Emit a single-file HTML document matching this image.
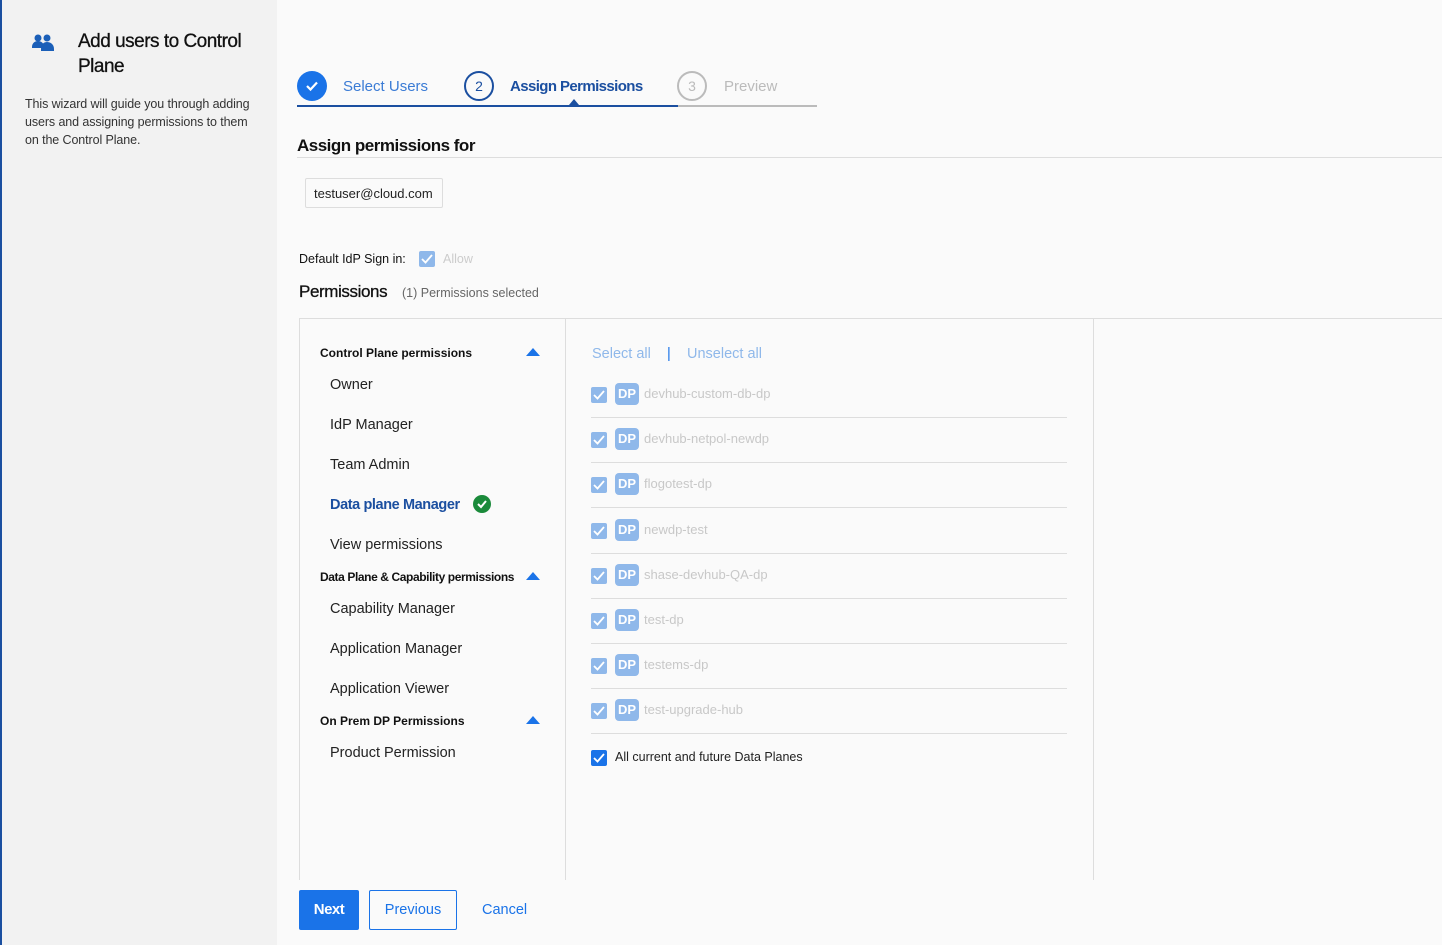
<!DOCTYPE html>
<html><head><style>
*{margin:0;padding:0;box-sizing:border-box}
body{width:1442px;height:945px;background:#fafafa;font-family:"Liberation Sans",sans-serif;position:relative;overflow:hidden;color:#222}
.a{position:absolute;white-space:nowrap}
.left{position:absolute;left:0;top:0;width:277px;height:945px;background:#f2f2f2;border-left:2px solid #1b4fa0}
.circ{position:absolute;width:30px;height:30px;border-radius:50%;text-align:center;line-height:26px;font-size:14px}
.cb{position:absolute;width:16px;height:16px;border-radius:2px;background:#8fb8ea}
.cb svg{position:absolute;left:2px;top:3px}
.dp{position:absolute;width:24px;height:22px;border-radius:4px;background:#8fb8ea;color:#fff;font-size:13px;font-weight:bold;text-align:center;line-height:22px}
.sep{position:absolute;left:591px;width:476px;height:1px;background:#ddd}
.dn{position:absolute;left:644px;font-size:13px;color:#c8c8c8}
.perm{position:absolute;left:330px;font-size:14.5px;color:#222}
.hd{position:absolute;left:320px;font-size:12px;font-weight:bold;color:#111}
.tri{position:absolute;left:526px;width:0;height:0;border-left:7px solid transparent;border-right:7px solid transparent;border-bottom:8px solid #1a73e8}
</style></head><body>
<div class="left"></div>
<svg class="a" style="left:31px;top:34px" width="25" height="18" viewBox="0 0 25 18"><circle cx="7" cy="4" r="3.5" fill="#1b5fb8"/><circle cx="16" cy="4" r="3.5" fill="#1b5fb8"/><path d="M1 13c0-4 3-6 6-6s6 2 6 6v1H1z" fill="#1b5fb8"/><path d="M10 15c0-5 3-7 6-7s7 2 7 7v2H10z" fill="#1b5fb8"/></svg>
<div class="a" style="left:78px;top:29px;font-size:19px;line-height:25px;color:#111;letter-spacing:-0.5px;-webkit-text-stroke:0.3px #111">Add users to Control<br>Plane</div>
<div class="a" style="left:25px;top:95px;font-size:12.5px;line-height:18px;color:#333;letter-spacing:-0.1px">This wizard will guide you through adding<br>users and assigning permissions to them<br>on the Control Plane.</div>

<div class="circ" style="left:297px;top:71px;background:#1a73e8"><svg width="14" height="12" viewBox="0 0 14 12" style="margin-top:9px"><path d="M2 6l3.5 3.5L12 2.5" stroke="#fff" stroke-width="2.2" fill="none"/></svg></div>
<div class="a" style="left:343px;top:78px;font-size:15px;color:#3a7bd5">Select Users</div>
<div class="circ" style="left:464px;top:71px;border:2px solid #1b4fa0;color:#1b4fa0">2</div>
<div class="a" style="left:510px;top:78px;font-size:15px;font-weight:bold;color:#1b4fa0;letter-spacing:-0.6px">Assign Permissions</div>
<div class="circ" style="left:677px;top:71px;border:2px solid #bbb;color:#bbb">3</div>
<div class="a" style="left:724px;top:78px;font-size:15px;color:#bbb">Preview</div>
<div class="a" style="left:297px;top:105px;width:381px;height:2px;background:#1b4fa0"></div>
<div class="a" style="left:678px;top:105px;width:139px;height:2px;background:#bbb"></div>
<div class="a" style="left:569px;top:99px;border-left:5px solid transparent;border-right:5px solid transparent;border-bottom:6px solid #1b4fa0"></div>

<div class="a" style="left:297px;top:136px;font-size:17px;font-weight:bold;color:#111;letter-spacing:-0.5px">Assign permissions for</div>
<div class="a" style="left:297px;top:157px;width:1145px;height:1px;background:#ddd"></div>
<div class="a" style="left:305px;top:178px;width:138px;height:30px;border:1px solid #ddd;border-radius:2px;background:#fafafa;font-size:13px;line-height:30px;padding-left:8px;color:#222">testuser@cloud.com</div>

<div class="a" style="left:299px;top:252px;font-size:12.5px;color:#111">Default IdP Sign in:</div>
<div class="cb" style="left:419px;top:251px"><svg width="12" height="10"><path d="M1 5l3.5 3.5L11 1" stroke="#fff" stroke-width="1.8" fill="none"/></svg></div>
<div class="a" style="left:443px;top:252px;font-size:12.5px;color:#ccc">Allow</div>
<div class="a" style="left:299px;top:282px;font-size:17px;color:#111;letter-spacing:-0.4px;-webkit-text-stroke:0.3px #111">Permissions</div>
<div class="a" style="left:402px;top:286px;font-size:12.5px;color:#666">(1) Permissions selected</div>

<div class="a" style="left:299px;top:318px;width:1143px;height:1px;background:#ddd"></div>
<div class="a" style="left:299px;top:318px;width:1px;height:562px;background:#ddd"></div>
<div class="a" style="left:565px;top:318px;width:1px;height:562px;background:#ddd"></div>
<div class="a" style="left:1093px;top:318px;width:1px;height:562px;background:#ddd"></div>

<div class="hd" style="top:346px">Control Plane permissions</div><div class="tri" style="top:348px"></div>
<div class="perm" style="top:377px">Owner</div>
<div class="perm" style="top:417px">IdP Manager</div>
<div class="perm" style="top:457px">Team Admin</div>
<div class="perm" style="top:497px;color:#1b4fa0;font-weight:bold;letter-spacing:-0.4px">Data plane Manager</div>
<div class="a" style="left:473px;top:495px;width:18px;height:18px;border-radius:50%;background:#1a8a3a"><svg width="18" height="18"><path d="M5 9l3 3 5-6" stroke="#fff" stroke-width="2" fill="none"/></svg></div>
<div class="perm" style="top:537px">View permissions</div>
<div class="hd" style="top:570px;letter-spacing:-0.4px">Data Plane &amp; Capability permissions</div><div class="tri" style="top:572px"></div>
<div class="perm" style="top:601px">Capability Manager</div>
<div class="perm" style="top:641px">Application Manager</div>
<div class="perm" style="top:681px">Application Viewer</div>
<div class="hd" style="top:714px">On Prem DP Permissions</div><div class="tri" style="top:716px"></div>
<div class="perm" style="top:745px">Product Permission</div>

<div class="a" style="left:592px;top:346px;font-size:14.5px;color:#8fb8ea">Select all</div>
<div class="a" style="left:667px;top:346px;font-size:14.5px;color:#1a73e8">|</div>
<div class="a" style="left:687px;top:346px;font-size:14.5px;color:#8fb8ea">Unselect all</div>

<div class="cb" style="left:591px;top:387px"><svg width="12" height="10"><path d="M1 5l3.5 3.5L11 1" stroke="#fff" stroke-width="1.8" fill="none"/></svg></div><div class="dp" style="left:615px;top:383px">DP</div><div class="dn" style="top:386px">devhub-custom-db-dp</div><div class="sep" style="top:417px"></div>
<div class="cb" style="left:591px;top:432px"><svg width="12" height="10"><path d="M1 5l3.5 3.5L11 1" stroke="#fff" stroke-width="1.8" fill="none"/></svg></div><div class="dp" style="left:615px;top:428px">DP</div><div class="dn" style="top:431px">devhub-netpol-newdp</div><div class="sep" style="top:462px"></div>
<div class="cb" style="left:591px;top:477px"><svg width="12" height="10"><path d="M1 5l3.5 3.5L11 1" stroke="#fff" stroke-width="1.8" fill="none"/></svg></div><div class="dp" style="left:615px;top:473px">DP</div><div class="dn" style="top:476px">flogotest-dp</div><div class="sep" style="top:507px"></div>
<div class="cb" style="left:591px;top:523px"><svg width="12" height="10"><path d="M1 5l3.5 3.5L11 1" stroke="#fff" stroke-width="1.8" fill="none"/></svg></div><div class="dp" style="left:615px;top:519px">DP</div><div class="dn" style="top:522px">newdp-test</div><div class="sep" style="top:553px"></div>
<div class="cb" style="left:591px;top:568px"><svg width="12" height="10"><path d="M1 5l3.5 3.5L11 1" stroke="#fff" stroke-width="1.8" fill="none"/></svg></div><div class="dp" style="left:615px;top:564px">DP</div><div class="dn" style="top:567px">shase-devhub-QA-dp</div><div class="sep" style="top:598px"></div>
<div class="cb" style="left:591px;top:613px"><svg width="12" height="10"><path d="M1 5l3.5 3.5L11 1" stroke="#fff" stroke-width="1.8" fill="none"/></svg></div><div class="dp" style="left:615px;top:609px">DP</div><div class="dn" style="top:612px">test-dp</div><div class="sep" style="top:643px"></div>
<div class="cb" style="left:591px;top:658px"><svg width="12" height="10"><path d="M1 5l3.5 3.5L11 1" stroke="#fff" stroke-width="1.8" fill="none"/></svg></div><div class="dp" style="left:615px;top:654px">DP</div><div class="dn" style="top:657px">testems-dp</div><div class="sep" style="top:688px"></div>
<div class="cb" style="left:591px;top:703px"><svg width="12" height="10"><path d="M1 5l3.5 3.5L11 1" stroke="#fff" stroke-width="1.8" fill="none"/></svg></div><div class="dp" style="left:615px;top:699px">DP</div><div class="dn" style="top:702px">test-upgrade-hub</div><div class="sep" style="top:733px"></div>
<div class="cb" style="left:591px;top:750px;background:#1a73e8"><svg width="12" height="10"><path d="M1 5l3.5 3.5L11 1" stroke="#fff" stroke-width="1.8" fill="none"/></svg></div>
<div class="a" style="left:615px;top:750px;font-size:12.5px;color:#222">All current and future Data Planes</div>

<div class="a" style="left:299px;top:890px;width:60px;height:40px;background:#1a73e8;border-radius:2px;color:#fff;font-weight:bold;font-size:15px;text-align:center;line-height:40px;letter-spacing:-0.5px">Next</div>
<div class="a" style="left:369px;top:890px;width:88px;height:40px;border:1px solid #1a73e8;border-radius:2px;color:#1a73e8;font-size:14.5px;text-align:center;line-height:38px">Previous</div>
<div class="a" style="left:482px;top:902px;font-size:14.5px;color:#1a73e8">Cancel</div>
</body></html>
